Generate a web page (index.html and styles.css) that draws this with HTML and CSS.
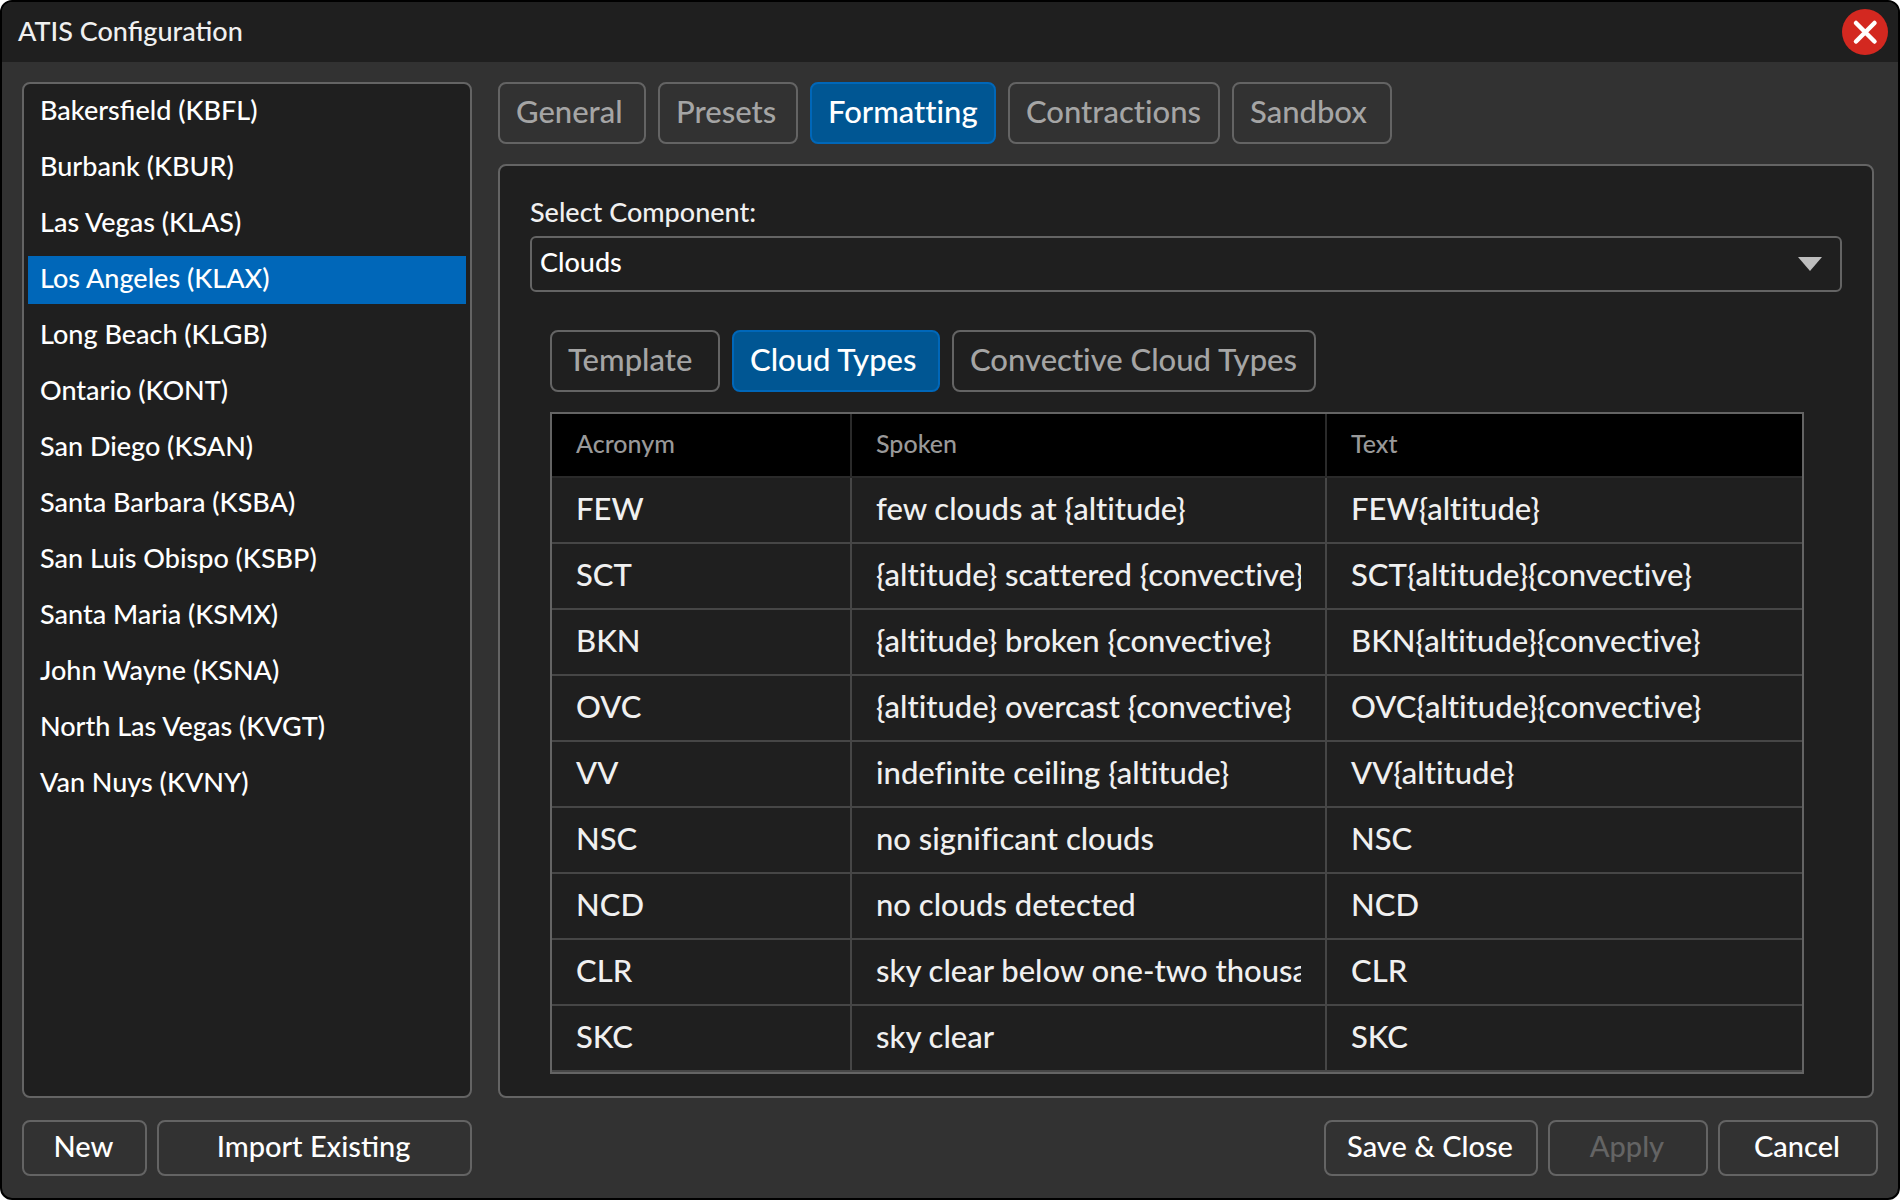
FILE: index.html
```html
<!DOCTYPE html>
<html lang="en">
<head>
<meta charset="utf-8">
<title>ATIS Configuration</title>
<link rel="stylesheet" href="styles.css">
</head>
<body>
<div class="window">
  <header class="titlebar">
    <h1 class="title">ATIS Configuration</h1>
    <button class="close" type="button" aria-label="Close">
      <svg viewBox="0 0 46 46" width="46" height="46" aria-hidden="true"><circle cx="23" cy="23" r="23" fill="#d32820"/><path d="M14 14 32.500 32.500M32.500 14 14 32.500" stroke="#fff" stroke-width="4.500" stroke-linecap="round"/></svg>
    </button>
  </header>
  <main class="body">
    <ul class="stations">
      <li><button class="station" type="button">Bakersfield (KBFL)</button></li>
      <li><button class="station" type="button">Burbank (KBUR)</button></li>
      <li><button class="station" type="button">Las Vegas (KLAS)</button></li>
      <li><button class="station selected" type="button">Los Angeles (KLAX)</button></li>
      <li><button class="station" type="button">Long Beach (KLGB)</button></li>
      <li><button class="station" type="button">Ontario (KONT)</button></li>
      <li><button class="station" type="button">San Diego (KSAN)</button></li>
      <li><button class="station" type="button">Santa Barbara (KSBA)</button></li>
      <li><button class="station" type="button">San Luis Obispo (KSBP)</button></li>
      <li><button class="station" type="button">Santa Maria (KSMX)</button></li>
      <li><button class="station" type="button">John Wayne (KSNA)</button></li>
      <li><button class="station" type="button">North Las Vegas (KVGT)</button></li>
      <li><button class="station" type="button">Van Nuys (KVNY)</button></li>
    </ul>
    <section class="content">
      <nav class="tabs main-tabs">
        <button class="tab" type="button">General</button>
        <button class="tab" type="button">Presets</button>
        <button class="tab active" type="button">Formatting</button>
        <button class="tab" type="button">Contractions</button>
        <button class="tab" type="button">Sandbox</button>
      </nav>
      <div class="panel">
        <label class="label" for="component">Select Component:</label>
        <div class="select-wrap">
          <select class="select" id="component"><option>Clouds</option></select>
          <svg class="arrow" viewBox="0 0 24 14" width="24" height="14" aria-hidden="true"><path d="M0 0H24L12 14Z" fill="#bebebe"/></svg>
        </div>
        <div class="component">
          <nav class="tabs sub-tabs">
            <button class="tab" type="button">Template</button>
            <button class="tab active" type="button">Cloud Types</button>
            <button class="tab" type="button">Convective Cloud Types</button>
          </nav>
          <table class="grid">
            <colgroup><col class="col-acronym"><col class="col-spoken"><col></colgroup>
            <thead><tr><th>Acronym</th><th>Spoken</th><th>Text</th></tr></thead>
            <tbody>
              <tr><td>FEW</td><td>few clouds at {altitude}</td><td>FEW{altitude}</td></tr>
              <tr><td>SCT</td><td><div class="clip">{altitude} scattered {convective}</div></td><td>SCT{altitude}{convective}</td></tr>
              <tr><td>BKN</td><td>{altitude} broken {convective}</td><td>BKN{altitude}{convective}</td></tr>
              <tr><td>OVC</td><td>{altitude} overcast {convective}</td><td>OVC{altitude}{convective}</td></tr>
              <tr><td>VV</td><td>indefinite ceiling {altitude}</td><td>VV{altitude}</td></tr>
              <tr><td>NSC</td><td>no significant clouds</td><td>NSC</td></tr>
              <tr><td>NCD</td><td>no clouds detected</td><td>NCD</td></tr>
              <tr><td>CLR</td><td><div class="clip">sky clear below one-two thousand</div></td><td>CLR</td></tr>
              <tr><td>SKC</td><td>sky clear</td><td>SKC</td></tr>
            </tbody>
          </table>
        </div>
      </div>
    </section>
  </main>
  <footer class="footer">
    <div class="left-actions">
      <button class="btn btn-new" type="button">New</button>
      <button class="btn btn-import" type="button">Import Existing</button>
    </div>
    <div class="right-actions">
      <button class="btn btn-save" type="button">Save &amp; Close</button>
      <button class="btn" type="button" disabled>Apply</button>
      <button class="btn" type="button">Cancel</button>
    </div>
  </footer>
</div>
</body>
</html>
```
FILE: styles.css
```css
* { box-sizing: border-box; }

body {
  margin: 0;
  background: #fff;
  color: #f0f0f0;
  font-family: Lato, "Noto Sans", sans-serif;
  font-size: 27px;
  font-weight: 500;
  line-height: 32px;
}

button, select { font: inherit; color: inherit; cursor: pointer; }

.window {
  min-height: 100vh;
  display: flex;
  flex-direction: column;
  border: 2px solid #000;
  border-radius: 12px;
  background: #323232;
  overflow: hidden;
}

.titlebar {
  display: flex;
  align-items: center;
  justify-content: space-between;
  height: 60px;
  padding: 0 10px 0 16px;
  background: #1f1f1f;
}

.title { margin: 0; padding-bottom: 2px; font-size: 27px; font-weight: 500; }

.close { display: flex; padding: 0; border: 0; background: none; }

.body {
  flex: 1;
  display: grid;
  grid-template-columns: 450px minmax(0, 1fr);
  gap: 26px;
  padding: 20px 24px 22px 20px;
}

.stations {
  display: flex;
  flex-direction: column;
  gap: 8px;
  margin: 0;
  padding: 4px;
  list-style: none;
  border: 2px solid #646464;
  border-radius: 8px;
  background: #1f1f1f;
}

.station {
  display: block;
  width: 100%;
  height: 48px;
  padding: 0 12px 4px;
  border: 0;
  background: none;
  color: #fff;
  text-align: left;
}

.station.selected { background: #0067b9; }

.content { display: flex; flex-direction: column; gap: 20px; }

.tabs { display: grid; justify-content: start; gap: 12px; }
.main-tabs { grid-template-columns: 148px 140px 186px 212px 160px; }
.sub-tabs { grid-template-columns: 170px 208px 364px; }

.tab {
  height: 62px;
  padding: 0 0 4px 16px;
  border: 2px solid #646464;
  border-radius: 8px;
  background: none;
  color: #a5a5a5;
  font-size: 31px;
  font-variant-ligatures: none;
  text-align: left;
  white-space: nowrap;
}

.tab.active { border-color: #0067b9; background: #005693; color: #fff; }

.panel {
  flex: 1;
  padding: 30px 30px 16px;
  border: 2px solid #646464;
  border-radius: 8px;
  background: #1f1f1f;
}

.label { display: block; height: 40px; }

.select-wrap { position: relative; }

.select {
  display: block;
  width: 100%;
  height: 56px;
  padding: 0 64px 4px 8px;
  appearance: none;
  border: 2px solid #646464;
  border-radius: 6px;
  background: #1f1f1f;
  color: #fff;
}

.arrow { position: absolute; top: 21px; right: 20px; pointer-events: none; }

.component {
  display: flex;
  flex-direction: column;
  gap: 20px;
  padding: 38px 38px 0 20px;
}

.grid {
  width: 100%;
  table-layout: fixed;
  border: 2px solid #646464;
  border-spacing: 0;
}

.col-acronym { width: 300px; }
.col-spoken { width: 475px; }

.grid th, .grid td {
  padding: 0 24px 4px;
  border-right: 2px solid #464646;
  border-bottom: 2px solid #464646;
  text-align: left;
  white-space: nowrap;
}

.grid th {
  height: 64px;
  border-color: #2a2a2a;
  background: #000;
  color: #999;
  font-size: 25px;
  font-weight: 500;
}

.grid td {
  height: 66px;
  font-size: 31px;
  font-variant-ligatures: none;
  line-height: 40px;
}

.grid th:last-child, .grid td:last-child { border-right: 0; }

.clip { overflow: hidden; }

.footer {
  display: flex;
  justify-content: space-between;
  padding: 0 20px 22px;
}

.left-actions, .right-actions { display: flex; gap: 10px; }

.btn {
  width: 160px;
  height: 56px;
  padding: 0 2px 4px 0;
  border: 2px solid #646464;
  border-radius: 8px;
  background: none;
  color: #fff;
  font-size: 29px;
}

.btn:disabled { color: #646464; }
.btn-new { width: 125px; }
.btn-import { width: 315px; }
.btn-save { width: 214px; }
```
